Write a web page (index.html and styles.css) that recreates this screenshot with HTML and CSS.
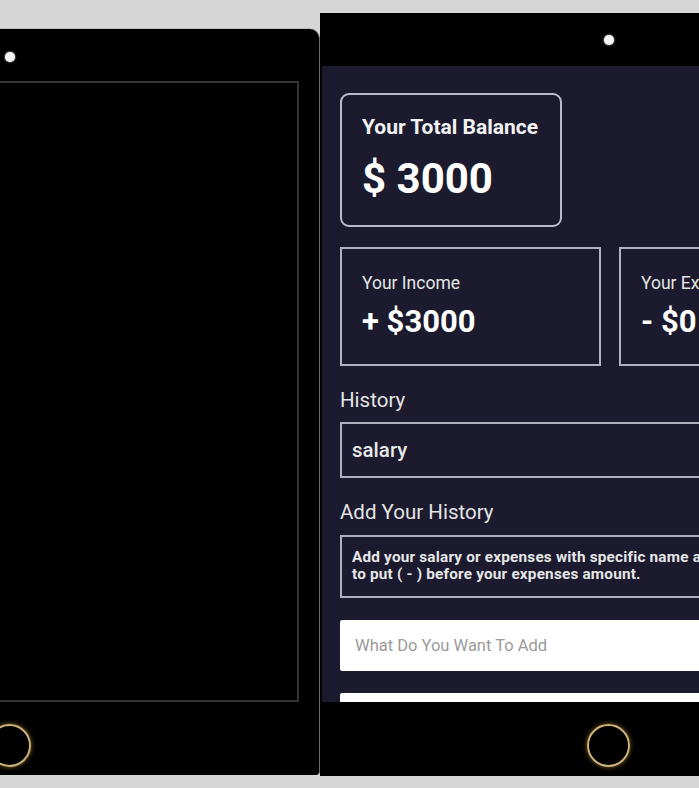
FILE: index.html
```html
<!DOCTYPE html>
<html lang="en">
<head>
<meta charset="utf-8">
<title>Expense Tracker</title>
<link rel="stylesheet" href="styles.css">
</head>
<body>
<div class="stage">
  <div class="phone phone-left">
    <div class="bar-top"><span class="dot"></span></div>
    <div class="screen-blank"></div>
    <div class="bar-bottom"><span class="home"></span></div>
  </div>
  <div class="phone phone-right">
    <div class="bar-top"><span class="dot"></span></div>
    <div class="screen">
      <div class="balance-card">
        <div class="balance-title">Your Total Balance</div>
        <div class="balance-value">$ 3000</div>
      </div>
      <div class="stats">
        <div class="stat-card">
          <div class="stat-title">Your Income</div>
          <div class="stat-value">+ $3000</div>
        </div>
        <div class="stat-card">
          <div class="stat-title">Your Expenses</div>
          <div class="stat-value">- $0</div>
        </div>
      </div>
      <div class="section-label">History</div>
      <div class="history-item">salary</div>
      <div class="section-label">Add Your History</div>
      <div class="note">Add your salary or expenses with specific name and don't forget<br>to put ( - ) before your expenses amount.</div>
      <input class="field" type="text" placeholder="What Do You Want To Add">
      <input class="field" type="text" placeholder="Amount">
    </div>
    <div class="bar-bottom"><span class="home"></span></div>
  </div>
</div>
</body>
</html>
```
FILE: styles.css
```css
* { box-sizing: border-box; }
html, body {
  margin: 0;
  height: 788px;
  overflow: hidden;
  background: #d6d6d6;
  font-family: Roboto, "Liberation Sans", Arial, sans-serif;
}
.stage {
  display: flex;
  align-items: flex-start;
}
.phone {
  flex: none;
  display: flex;
  flex-direction: column;
  background: #000;
}
.phone-left {
  width: 620px;
  height: 746px;
  margin-left: -300px;
  margin-top: 29px;
  border-radius: 0 10px 4px 0;
  border-right: 1px solid #6a6a6a;
  box-shadow: 0 -1px 0 #bdbdbd;
}
.phone-right {
  width: 576px;
  height: 763px;
  margin-top: 13px;
  padding-left: 2px;
}
.bar-top {
  display: flex;
  align-items: center;
  justify-content: center;
  flex: none;
}
.phone-left .bar-top { height: 52px; padding-top: 3px; }
.phone-right .bar-top { height: 53px; }
.dot {
  width: 10px;
  height: 10px;
  border-radius: 50%;
  background: #f4f4f4;
  box-shadow: 0 0 2px #fff;
}
.screen-blank {
  flex: 1;
  margin-right: 20px;
  border: 2px solid #343434;
  border-left: none;
  background: #000;
}
.bar-bottom {
  flex: none;
  display: flex;
  justify-content: center;
  padding-top: 22px;
}
.phone-left .bar-bottom { height: 73px; }
.phone-right .bar-bottom { height: 74px; }
.home {
  width: 43px;
  height: 43px;
  border-radius: 50%;
  border: 2px solid #cdb27a;
  box-shadow: 0 0 5px rgba(214, 170, 80, 0.6);
}
.phone-right .bar-bottom .home { margin-left: -2px; }
.screen {
  height: 636px;
  flex: none;
  background: #1b1a2e;
  padding: 27px 0 0 18px;
  overflow: hidden;
  color: #fff;
}
.balance-card {
  width: 222px;
  height: 134px;
  border: 2px solid #bcbacb;
  border-radius: 9px;
  padding: 20px 0 0 20px;
}
.balance-title {
  font-size: 21px;
  line-height: 24px;
  font-weight: 700;
  color: #f2f2f2;
}
.balance-value {
  margin-top: 16px;
  font-size: 42px;
  line-height: 48px;
  font-weight: 700;
}
.stats {
  display: flex;
  gap: 18px;
  margin-top: 20px;
}
.stat-card {
  flex: none;
  width: 261px;
  height: 119px;
  border: 2px solid #b3b2c2;
  padding: 24px 0 0 20px;
}
.stat-title {
  font-size: 17.5px;
  line-height: 20px;
  color: #e6e6e6;
}
.stat-value {
  margin-top: 11px;
  font-size: 31px;
  line-height: 36px;
  font-weight: 700;
}
.section-label {
  margin-top: 22px;
  font-size: 20.5px;
  line-height: 24px;
  color: #e4e4e4;
}
.history-item {
  margin-top: 10px;
  width: 540px;
  height: 56px;
  border: 2px solid #b0afbf;
  display: flex;
  align-items: center;
  padding-left: 10px;
  font-size: 20.5px;
  font-weight: 500;
  color: #e8e8e8;
}
.note {
  margin-top: 11px;
  width: 540px;
  height: 63px;
  border: 2px solid #b0afbf;
  padding: 12px 0 0 10px;
  font-size: 15.3px;
  line-height: 17px;
  letter-spacing: 0.2px;
  font-weight: 700;
  color: #e6e6e6;
}
.field {
  display: block;
  margin-top: 22px;
  width: 540px;
  height: 51px;
  border: none;
  border-radius: 2px;
  background: #fff;
  padding: 0 15px;
  font-family: Roboto, "Liberation Sans", Arial, sans-serif;
  font-size: 16.5px;
  color: #333;
}
.field::placeholder { color: #9a9a9a; }
```
